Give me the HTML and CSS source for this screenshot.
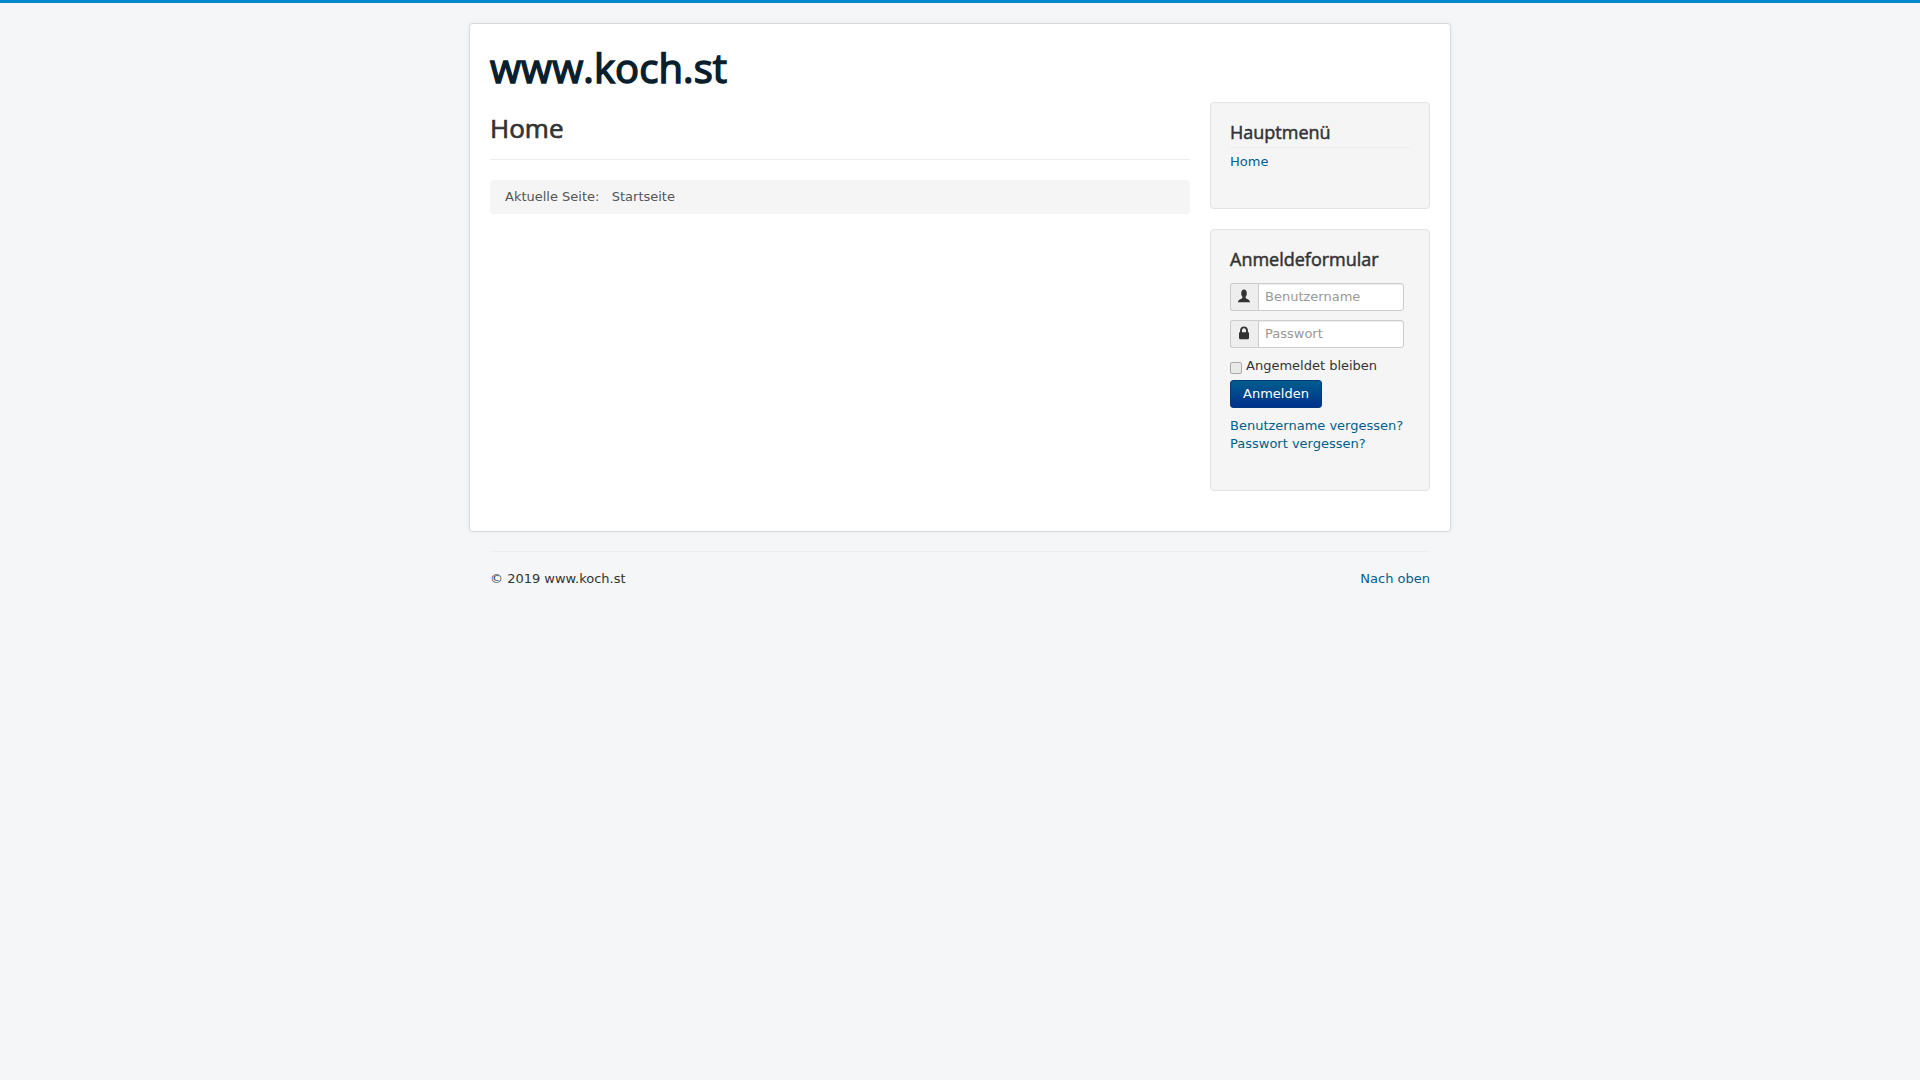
FILE: index.html
```html
<!DOCTYPE html>
<html lang="de">
<head>
    <meta charset="UTF-8">
    <title>Home</title>
    <link rel="stylesheet" href="styles.css">
</head>
<body>
    <div class="body">
        <div class="container">
            <header class="header">
                <a class="brand" href="#">www.koch.st</a>
            </header>
            <div class="row">
                <main class="content">
                    <div class="page-header">
                        <h2>Home</h2>
                    </div>
                    <ul class="breadcrumb">
                        <li class="active">Aktuelle Seite: &nbsp;</li>
                        <li>Startseite</li>
                    </ul>
                </main>
                <aside class="sidebar">
                    <div class="well well-menu">
                        <h3 class="page-header-small">Hauptmenü</h3>
                        <ul class="nav">
                            <li><a href="#">Home</a></li>
                        </ul>
                    </div>
                    <div class="well well-login">
                        <h3 class="login-title">Anmeldeformular</h3>
                        <form class="login-form">
                            <div class="input-prepend">
                                <span class="add-on">
                                    <svg width="14" height="14" viewBox="0 0 16 16"><path d="M6.2 10.4c-.2-.6-.1-1.1.1-1.4C5.4 8.100 4.800 6.600 4.800 4.800 4.800 2.200 6 .6 8 .6s3.200 1.600 3.200 4.200c0 1.800-.6 3.300-1.500 4.200.2.300.3.800.1 1.400.5.900 4.700 1.600 5.200 4.700H1c.5-3.100 4.700-3.800 5.200-4.700z"/></svg>
                                </span>
                                <input type="text" placeholder="Benutzername">
                            </div>
                            <div class="input-prepend">
                                <span class="add-on">
                                    <svg width="14" height="14" viewBox="0 0 16 16"><path fill-rule="evenodd" d="M3.500 7V5C3.500 2.300 5.400.6 8 .6s4.500 1.700 4.500 4.400v2h.3c.5 0 .9.400.9.900v6.200c0 .5-.4.900-.9.900H3.200c-.5 0-.9-.4-.9-.9V7.900c0-.5.400-.9.900-.9zm2.200 0h4.600V5C10.300 3.600 9.300 2.700 8 2.700S5.700 3.600 5.700 5z"/></svg>
                                </span>
                                <input type="password" placeholder="Passwort">
                            </div>
                            <label class="checkbox"><input type="checkbox"> Angemeldet bleiben</label>
                            <button type="button" class="btn-primary">Anmelden</button>
                            <ul class="links">
                                <li><a href="#">Benutzername vergessen?</a></li>
                                <li><a href="#">Passwort vergessen?</a></li>
                            </ul>
                        </form>
                    </div>
                </aside>
            </div>
        </div>
        <footer class="footer">
            <hr>
            <div class="footer-row">
                <p>© 2019 www.koch.st</p>
                <a href="#">Nach oben</a>
            </div>
        </footer>
    </div>
</body>
</html>
```

FILE: styles.css
```css
* { box-sizing: border-box; }
html, body { margin: 0; padding: 0; }
body {
    font-family: "DejaVu Sans", sans-serif;
    font-size: 13px;
    line-height: 18px;
    color: #333;
    background: #f4f6f7;
    border-top: 3px solid #0088cc;
    min-height: 1080px;
}
a { color: #005e8d; text-decoration: none; }
ul { list-style: none; margin: 0; padding: 0; }
h2, h3 { font-family: "Open Sans", sans-serif; margin: 0; }

.body { padding-top: 20px; }
.container {
    width: 982px;
    margin: 0 auto;
    padding: 20px;
    background: #fff;
    border: 1px solid rgba(0,0,0,0.15);
    border-radius: 4px;
    box-shadow: 0 0 6px rgba(0,0,0,0.05);
}
.header { margin-bottom: 10px; }
.brand {
    display: block;
    font-family: "Open Sans", sans-serif;
    font-size: 40px;
    font-weight: 400;
    line-height: 48px;
    letter-spacing: 0.1px;
    color: #0a1f2e;
    -webkit-text-stroke: 1.5px #0a1f2e;
}
.row { display: flex; gap: 20px; }
.content { width: 700px; }
.sidebar { width: 220px; margin-bottom: 20px; }

.page-header {
    height: 58px;
    padding-top: 6px;
    margin-bottom: 20px;
    border-bottom: 1px solid #eee;
}
.page-header h2 {
    font-size: 26px;
    line-height: 40px;
    font-weight: 400;
    -webkit-text-stroke: 0.7px #333;
}
.breadcrumb {
    display: flex;
    height: 34px;
    padding: 8px 15px;
    background: #f5f5f5;
    border-radius: 4px;
}
.breadcrumb .active { margin-right: 4px; }
.breadcrumb li { color: #555; }

.well {
    background: #f5f5f5;
    border: 1px solid #e3e3e3;
    border-radius: 4px;
    padding: 19px;
    margin-bottom: 20px;
}
.well-menu { height: 107px; padding-top: 17px; }
.well-login { height: 262px; padding-top: 17px; margin-bottom: 0; }
.page-header-small, .login-title {
    font-size: 18px;
    font-weight: 400;
    line-height: 24px;
    -webkit-text-stroke: 0.5px #333;
}
.page-header-small {
    padding-bottom: 3px;
    border-bottom: 1px solid #eee;
    margin-bottom: 5px;
}
.login-title { margin-bottom: 12px; }
.input-prepend { display: flex; height: 28px; margin-bottom: 9px; width: 174px; }
.add-on {
    display: flex;
    align-items: center;
    justify-content: center;
    width: 28px;
    padding-right: 2px;
    background: #eee;
    border: 1px solid #ccc;
    border-right: 0;
    border-radius: 3px 0 0 3px;
}
.add-on svg { fill: #333; margin-top: -3px; }
.input-prepend input {
    width: 146px;
    height: 28px;
    padding: 3px 6px 5px;
    font: 13px/18px "DejaVu Sans", sans-serif;
    color: #555;
    background: #fff;
    border: 1px solid #ccc;
    border-radius: 0 3px 3px 0;
    box-shadow: inset 0 1px 1px rgba(0,0,0,0.075);
    outline: 0;
}
.input-prepend input::placeholder { color: #999; }
.checkbox { display: flex; align-items: center; height: 18px; margin-bottom: 5px; }
.checkbox input {
    appearance: none;
    width: 12px;
    height: 12px;
    margin: 3px 4px 0 0;
    background: #e9e9e9;
    border: 1px solid #aaa;
    border-radius: 2px;
}
.btn-primary {
    display: block;
    height: 28px;
    padding: 0 12px;
    font: 13px/18px "DejaVu Sans", sans-serif;
    color: #fff;
    background: linear-gradient(to bottom, #005e8d, #002f8d);
    border: 1px solid #003a78;
    border-radius: 3px;
}
.links { margin-top: 9px; }

.footer { width: 940px; margin: 0 auto; }
.footer hr { margin: 19px 0 0; border: 0; border-top: 1px solid #eee; height: 0; }
.footer-row { display: flex; justify-content: space-between; padding-top: 18px; }
.footer-row p { margin: 0; }
```
